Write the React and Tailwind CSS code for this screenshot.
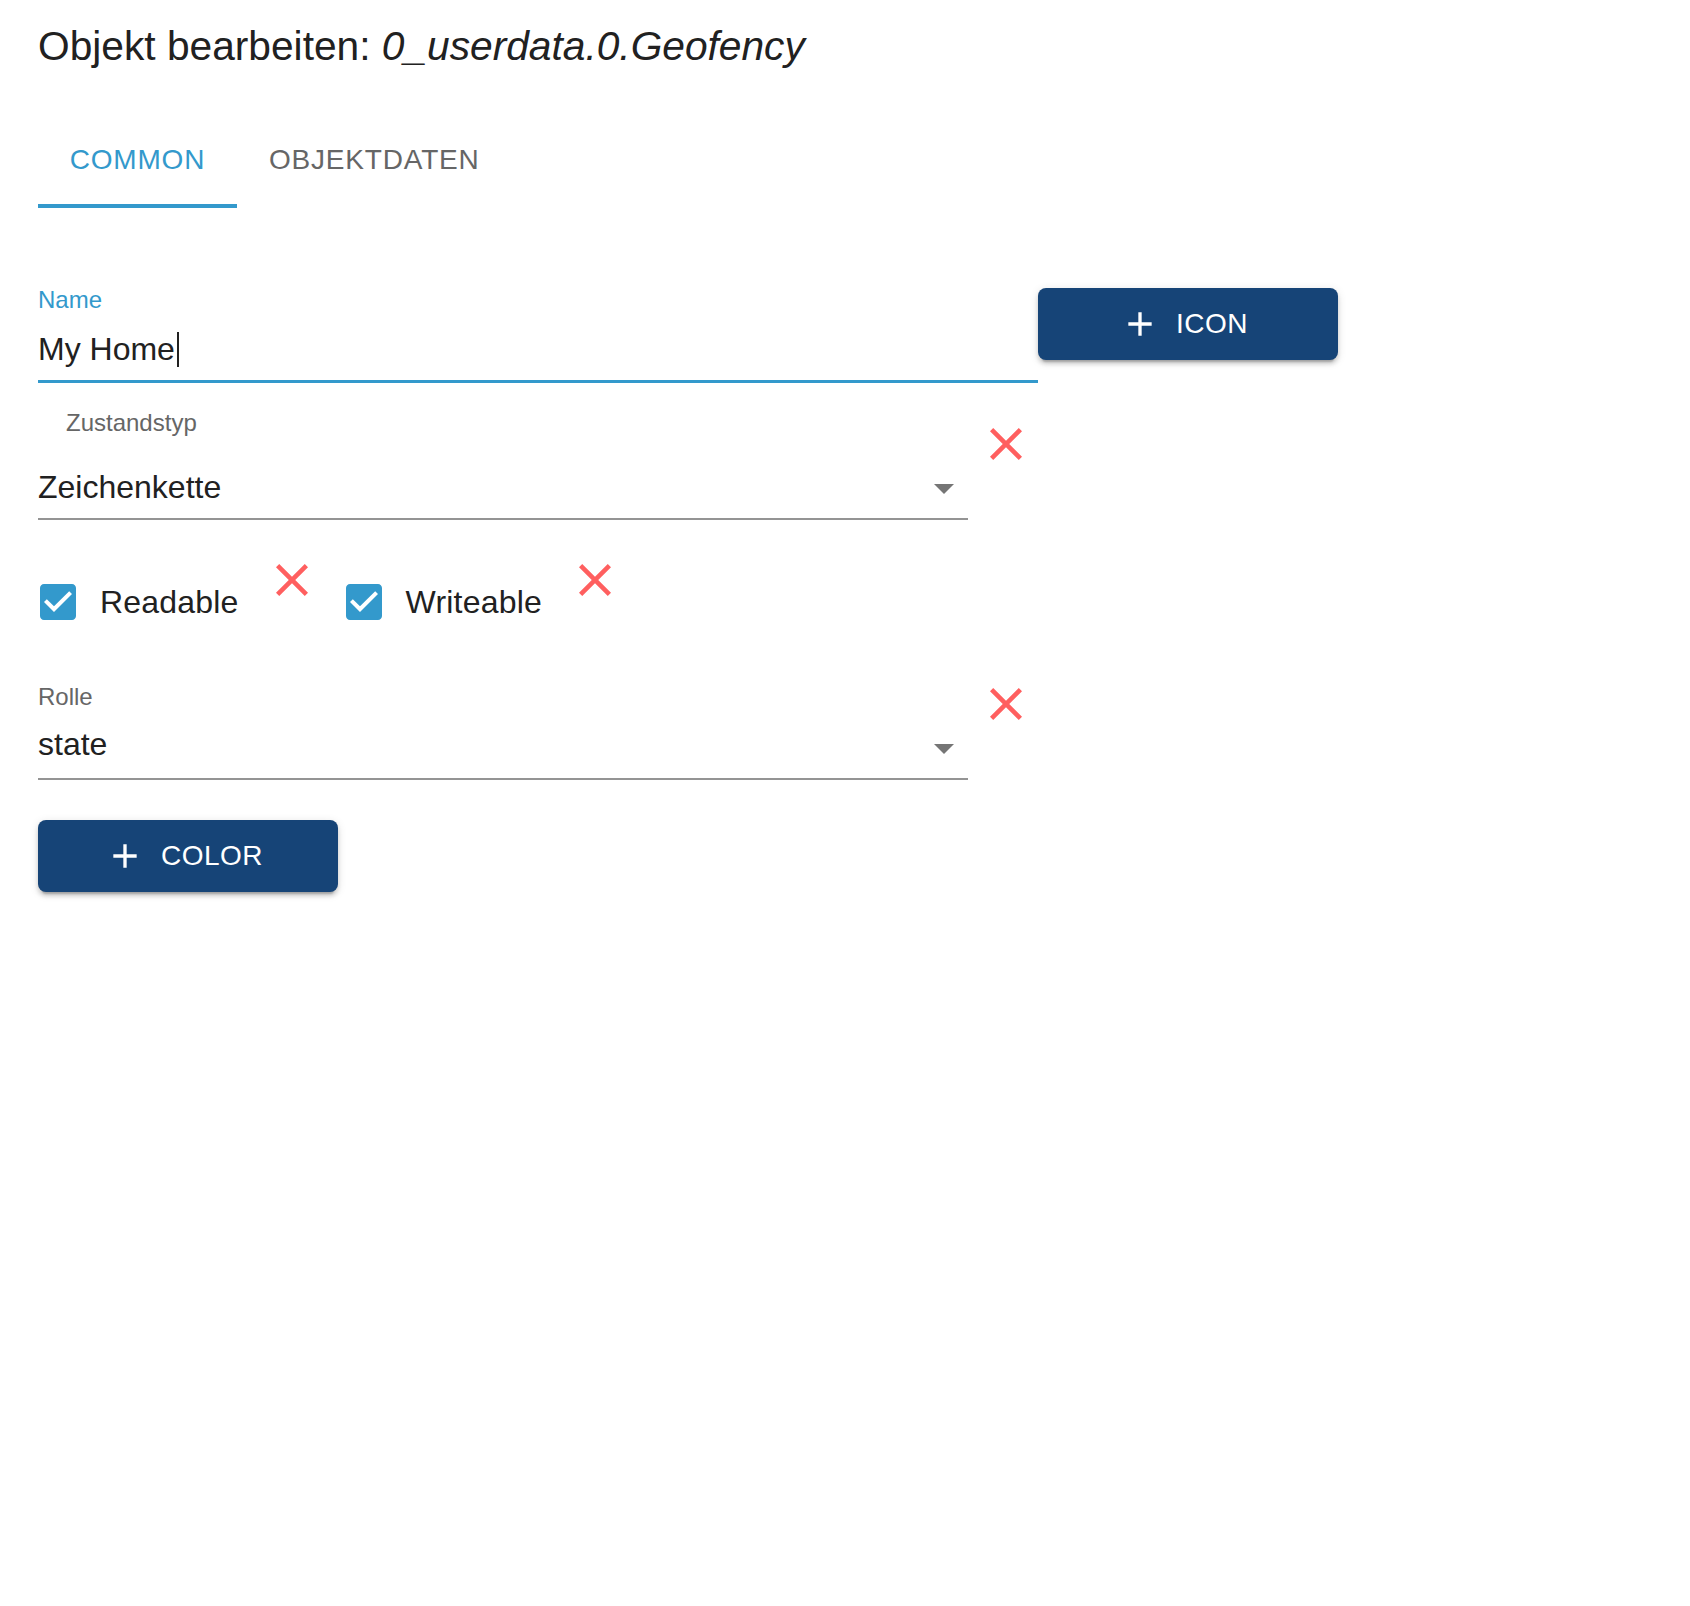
import React from "react";

const FONT = "font-['Liberation_Sans','Helvetica_Neue',Arial,sans-serif]";

function RedX({ className = "" }) {
  return (
    <svg className={className} width="32" height="32" viewBox="5 5 14 14" aria-hidden="true">
      <path
        fill="#ff5f5f"
        d="M19 6.41L17.59 5 12 10.59 6.41 5 5 6.41 10.59 12 5 17.59 6.41 19 12 13.41 17.59 19 19 17.59 13.41 12z"
      />
    </svg>
  );
}

function Arrow({ className = "" }) {
  return (
    <svg className={className} width="20" height="10" viewBox="7 10 10 5" aria-hidden="true">
      <path fill="#757575" d="M7 10l5 5 5-5z" />
    </svg>
  );
}

function Plus() {
  return (
    <svg className="-ml-[8px] mr-[16px] shrink-0" width="40" height="40" viewBox="0 0 24 24" aria-hidden="true">
      <path fill="#ffffff" d="M19 13h-6v6h-2v-6H5v-2h6V5h2v6h6v2z" />
    </svg>
  );
}

function CheckIcon() {
  return (
    <svg width="48" height="48" viewBox="0 0 24 24" aria-hidden="true">
      <path
        fill="#3399cc"
        d="M19 3H5c-1.11 0-2 .9-2 2v14c0 1.1.89 2 2 2h14c1.11 0 2-.9 2-2V5c0-1.1-.89-2-2-2zm-9 14l-5-5 1.41-1.41L10 14.17l7.59-7.59L19 8l-9 9z"
      />
    </svg>
  );
}

function BlueButton({ label }) {
  return (
    <button
      type="button"
      className="flex h-[72px] w-[300px] shrink-0 items-center justify-center rounded-[8px] bg-[#164477] text-[28px] leading-[40px] font-medium uppercase tracking-[0.5px] text-white shadow-[0_6px_2px_-4px_rgba(0,0,0,0.2),0_4px_4px_0_rgba(0,0,0,0.14),0_2px_10px_0_rgba(0,0,0,0.12)]"
    >
      <Plus />
      <span>{label}</span>
    </button>
  );
}

function CheckLabel({ text, first }) {
  return (
    <label className={`flex items-center ${first ? "-ml-[22px]" : "ml-[14px]"}`}>
      <span className="p-[18px]">
        <CheckIcon />
      </span>
      <span className="text-[32px] leading-[40px] tracking-[0.2px] text-[#212121]">{text}</span>
    </label>
  );
}

export default function App() {
  return (
    <div className={`${FONT} min-h-[1606px] w-full bg-white pl-[38px] pt-[22px] text-[#212121]`}>
      <h1 className="text-[40.7px] leading-[48px] font-normal text-[#212121]">
        Objekt bearbeiten: <i>0_userdata.0.Geofency</i>
      </h1>

      <div className="mt-[42px] flex h-[96px]">
        <div className="flex w-[199px] items-center justify-center border-b-[4px] border-[#3399cc] pt-[4px] text-[28px] uppercase tracking-[0.8px] text-[#3399cc]">
          Common
        </div>
        <div className="flex items-center justify-center border-b-[4px] border-transparent px-[32px] pt-[4px] text-[28px] uppercase tracking-[0.8px] text-[#666666]">
          Objektdaten
        </div>
      </div>

      <div className="mt-[80px] flex items-start">
        <div className="w-[1000px]">
          <div className="h-[24px] text-[24px] leading-[24px] text-[#3399cc]">Name</div>
          <div className="border-b-[3px] border-[#3399cc] pb-[11px]">
            <div className="mt-[17px] flex h-[40px] items-center text-[32px] leading-[40px] text-[#212121]">
              <span>My Home</span>
              <span className="ml-[2px] h-[35px] w-[2px] bg-[#212121]" />
            </div>
          </div>
        </div>
        <BlueButton label="Icon" />
      </div>

      <div className="mt-[28px] flex items-start">
        <div className="w-[930px]">
          <div className="h-[24px] pl-[28px] text-[24px] leading-[24px] text-[#666666]">Zustandstyp</div>
          <div className="mt-[32px] flex items-start border-b-2 border-[#949494] pb-[11px]">
            <div className="h-[40px] flex-1 text-[32px] leading-[40px] text-[#212121]">Zeichenkette</div>
            <Arrow className="mr-[14px] mt-[17px]" />
          </div>
        </div>
        <RedX className="ml-[22px] mt-[17px]" />
      </div>

      <div className="mt-[40px] flex items-start">
        <CheckLabel text="Readable" first />
        <RedX className="ml-[37px] mt-[4px]" />
        <CheckLabel text="Writeable" />
        <RedX className="ml-[37px] mt-[4px]" />
      </div>

      <div className="mt-[41px] flex items-start">
        <div className="w-[930px]">
          <div className="h-[24px] text-[24px] leading-[24px] text-[#666666]">Rolle</div>
          <div className="mt-[15px] flex items-start border-b-2 border-[#949494] pb-[14px]">
            <div className="h-[40px] flex-1 text-[32px] leading-[40px] text-[#212121]">state</div>
            <Arrow className="mr-[14px] mt-[20px]" />
          </div>
        </div>
        <RedX className="ml-[22px] mt-[3px]" />
      </div>

      <div className="mt-[40px]">
        <BlueButton label="Color" />
      </div>
    </div>
  );
}
